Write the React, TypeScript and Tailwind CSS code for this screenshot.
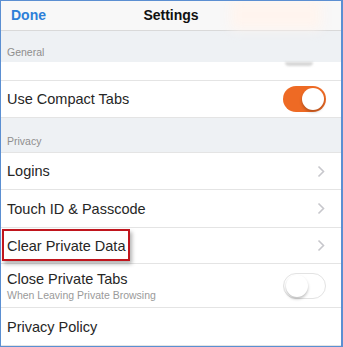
const font = { fontFamily: '"Liberation Sans", Arial, sans-serif' };

function Chevron() {
  return (
    <svg width="8" height="13" viewBox="0 0 8 13" className="mr-[16px]">
      <path d="M1.5 1.5 L6.5 6.5 L1.5 11.5" fill="none" stroke="#c7c7cc" strokeWidth="1.6" />
    </svg>
  );
}

function Toggle({ on }: { on: boolean }) {
  return (
    <div
      className={`mr-[15px] flex h-[26px] w-[43px] items-center rounded-full p-[2px] ${
        on ? "justify-end bg-[#ee6a24]" : "justify-start border border-[#e3e3e3] bg-white"
      }`}
    >
      <div className="h-[22px] w-[22px] rounded-full bg-white shadow-[0_2px_3px_rgba(0,0,0,0.25)]" />
    </div>
  );
}

function Row({
  label,
  h,
  chevron,
  toggle,
  sub,
}: {
  label: string;
  h: string;
  chevron?: boolean;
  toggle?: boolean;
  sub?: string;
}) {
  return (
    <div className={`flex ${h} items-center justify-between border-b border-[#e4e4e4] bg-white pl-[6px]`}>
      <div className="flex flex-col">
        <span className="text-[14.5px] leading-[18px] text-[#262626]">{label}</span>
        {sub && <span className="mt-[1px] text-[10.5px] leading-[13px] text-[#9a9a9a]">{sub}</span>}
      </div>
      {chevron && <Chevron />}
      {toggle !== undefined && <Toggle on={toggle} />}
    </div>
  );
}

export default function App() {
  return (
    <div
      className="flex h-[347px] w-[343px] flex-col overflow-hidden border-t border-b border-l border-r-2 border-[#5b8fd2] bg-white"
      style={font}
    >
      {/* nav bar */}
      <div className="relative flex h-[30px] shrink-0 items-center border-b border-[#d9d9d9] bg-[#f8f8f8]">
        <span className="ml-[10px] text-[14px] font-bold text-[#2d7fd8]">Done</span>
        <span className="absolute left-0 right-0 text-center text-[14px] font-bold text-[#111]">Settings</span>
        <div className="absolute right-[20px] top-0 h-[28px] w-[90px] bg-[#fff4ee] blur-[6px]" />
      </div>

      {/* General header */}
      <div className="flex h-[31px] shrink-0 items-end bg-[#eef1f4] pb-[1px] pl-[6px]">
        <span className="text-[10.5px] text-[#8e8e8e]">General</span>
      </div>
      <div className="relative h-[19px] shrink-0 border-b border-[#e4e4e4] bg-white">
        <div className="absolute left-[284px] top-[0px] h-[4px] w-[28px] rounded-b-full bg-[#d6d6d6] blur-[1px]" />
      </div>

      <Row label="Use Compact Tabs" h="h-[37px]" toggle />

      {/* Privacy header */}
      <div className="flex h-[35px] shrink-0 items-end border-b border-[#e4e4e4] bg-[#eef1f4] pb-[2px] pl-[6px]">
        <span className="text-[10.5px] text-[#8e8e8e]">Privacy</span>
      </div>

      <Row label="Logins" h="h-[37px]" chevron />
      <Row label="Touch ID & Passcode" h="h-[38px]" chevron />
      <div className="relative">
        <Row label="Clear Private Data" h="h-[36px]" chevron />
        <div className="pointer-events-none absolute left-[1px] top-[1px] h-[32px] w-[128px] border-2 border-[#c0151d] shadow-[2px_3px_4px_rgba(0,0,0,0.3)]" />
      </div>
      <Row label="Close Private Tabs" sub="When Leaving Private Browsing" h="h-[44px]" toggle={false} />
      <Row label="Privacy Policy" h="h-[38px]" />
    </div>
  );
}
